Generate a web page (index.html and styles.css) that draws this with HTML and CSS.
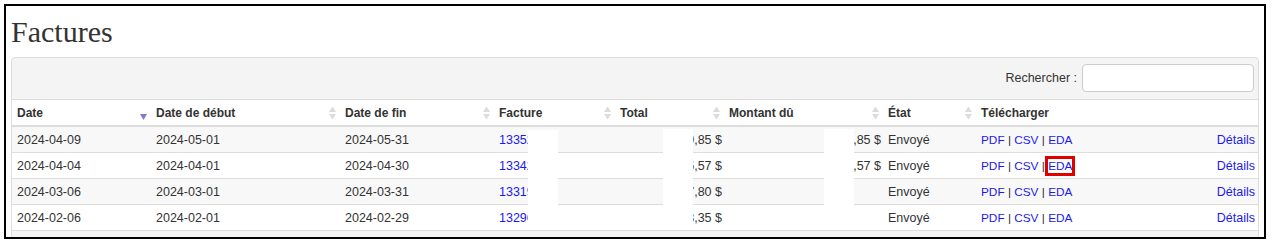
FILE: index.html
```html
<!DOCTYPE html>
<html lang="fr">
<head>
<meta charset="utf-8">
<title>Factures</title>
<link rel="stylesheet" href="styles.css">
</head>
<body>
<div class="frame">
  <h1 class="title">Factures</h1>
  <div class="panel">
    <div class="toolbar">
      <label class="search-label">Rechercher :</label>
      <input class="search-input" type="text">
    </div>
    <table class="grid">
      <colgroup>
        <col class="c1"><col class="c2"><col class="c3"><col class="c4"><col class="c5"><col class="c6"><col class="c7"><col class="c8"><col class="c9">
      </colgroup>
      <thead>
        <tr>
          <th><div class="th-in"><span>Date</span><svg class="sort" width="7" height="14" viewBox="0 0 7 14"><polygon class="s-down-active" points="0,8 7,8 3.5,14"/></svg></div></th>
          <th><div class="th-in"><span>Date de début</span><svg class="sort" width="7" height="14" viewBox="0 0 7 14"><polygon points="0,6 3.5,0.5 7,6"/><polygon points="0,8 7,8 3.5,13.5"/></svg></div></th>
          <th><div class="th-in"><span>Date de fin</span><svg class="sort" width="7" height="14" viewBox="0 0 7 14"><polygon points="0,6 3.5,0.5 7,6"/><polygon points="0,8 7,8 3.5,13.5"/></svg></div></th>
          <th><div class="th-in"><span>Facture</span><svg class="sort" width="7" height="14" viewBox="0 0 7 14"><polygon points="0,6 3.5,0.5 7,6"/><polygon points="0,8 7,8 3.5,13.5"/></svg></div></th>
          <th><div class="th-in"><span>Total</span><svg class="sort" width="7" height="14" viewBox="0 0 7 14"><polygon points="0,6 3.5,0.5 7,6"/><polygon points="0,8 7,8 3.5,13.5"/></svg></div></th>
          <th><div class="th-in"><span>Montant dû</span><svg class="sort" width="7" height="14" viewBox="0 0 7 14"><polygon points="0,6 3.5,0.5 7,6"/><polygon points="0,8 7,8 3.5,13.5"/></svg></div></th>
          <th><div class="th-in"><span>État</span><svg class="sort" width="7" height="14" viewBox="0 0 7 14"><polygon points="0,6 3.5,0.5 7,6"/><polygon points="0,8 7,8 3.5,13.5"/></svg></div></th>
          <th><div class="th-in"><span>Télécharger</span></div></th>
          <th></th>
        </tr>
      </thead>
      <tbody>
        <tr class="odd">
          <td>2024-04-09</td><td>2024-05-01</td><td>2024-05-31</td>
          <td><a class="lnk" href="#">13352</a></td>
          <td class="num">1 209,85 $</td><td class="num">209,85 $</td>
          <td>Envoyé</td>
          <td class="dl"><a class="lnk" href="#">PDF</a> | <a class="lnk" href="#">CSV</a> | <a class="lnk" href="#">EDA</a></td>
          <td class="right"><a class="lnk" href="#">Détails</a></td>
        </tr>
        <tr>
          <td>2024-04-04</td><td>2024-04-01</td><td>2024-04-30</td>
          <td><a class="lnk" href="#">13342</a></td>
          <td class="num">1 165,57 $</td><td class="num">165,57 $</td>
          <td>Envoyé</td>
          <td class="dl"><a class="lnk" href="#">PDF</a> | <a class="lnk" href="#">CSV</a> | <a class="lnk mark" href="#">EDA</a></td>
          <td class="right"><a class="lnk" href="#">Détails</a></td>
        </tr>
        <tr class="odd">
          <td>2024-03-06</td><td>2024-03-01</td><td>2024-03-31</td>
          <td><a class="lnk" href="#">13319</a></td>
          <td class="num">1 177,80 $</td><td class="num"></td>
          <td>Envoyé</td>
          <td class="dl"><a class="lnk" href="#">PDF</a> | <a class="lnk" href="#">CSV</a> | <a class="lnk" href="#">EDA</a></td>
          <td class="right"><a class="lnk" href="#">Détails</a></td>
        </tr>
        <tr>
          <td>2024-02-06</td><td>2024-02-01</td><td>2024-02-29</td>
          <td><a class="lnk" href="#">13296</a></td>
          <td class="num">1 183,35 $</td><td class="num"></td>
          <td>Envoyé</td>
          <td class="dl"><a class="lnk" href="#">PDF</a> | <a class="lnk" href="#">CSV</a> | <a class="lnk" href="#">EDA</a></td>
          <td class="right"><a class="lnk" href="#">Détails</a></td>
        </tr>
      </tbody>
    </table>
    <div class="footer"></div>
  </div>
  <div class="redact redact-a"></div>
  <div class="redact redact-b"></div>
  <div class="redact redact-c"></div>
</div>
</body>
</html>
```

FILE: styles.css
```css
html, body {
  margin: 0;
  padding: 0;
  background: #fff;
}
body {
  padding: 4px;
  font-family: "Liberation Sans", Arial, sans-serif;
  color: #333;
}
.frame {
  position: relative;
  box-sizing: border-box;
  width: 1262px;
  height: 235px;
  border: 2px solid #000;
  padding: 9px 5px 0 5px;
  overflow: hidden;
}
.title {
  margin: 0 0 8px 0;
  font-family: "Liberation Serif", "Times New Roman", serif;
  font-size: 30px;
  line-height: 34px;
  font-weight: normal;
  color: #333;
}
.panel {
  border: 1px solid #ddd;
  border-radius: 4px 4px 0 0;
  background: #f4f4f4;
}
.toolbar {
  display: flex;
  justify-content: flex-end;
  align-items: center;
  gap: 5px;
  padding: 6px 4px 7px 0;
}
.search-label {
  font-size: 12.5px;
  color: #333;
}
.search-input {
  box-sizing: border-box;
  width: 172px;
  height: 28px;
  margin: 0;
  border: 1px solid #ccc;
  border-radius: 4px;
  background: #fff;
  padding: 0 6px;
}
.grid {
  width: 100%;
  border-collapse: collapse;
  table-layout: fixed;
  background: #fff;
}
.c1 { width: 139px; }
.c2 { width: 189px; }
.c3 { width: 154px; }
.c4 { width: 121px; }
.c5 { width: 109px; }
.c6 { width: 159px; }
.c7 { width: 93px; }
.c8 { width: 202px; }
.c9 { width: 80px; }
.grid th {
  height: 25px;
  padding: 0 4px 0 5px;
  border-top: 1px solid #ddd;
  border-bottom: 2px solid #ddd;
  font-size: 12px;
  line-height: 14px;
  font-weight: bold;
  text-align: left;
  color: #333;
  background: #fff;
}
.th-in {
  display: flex;
  justify-content: space-between;
  align-items: center;
}
.sort polygon {
  fill: #dcdcdc;
}
.sort .s-down-active {
  fill: #7b7bd6;
}
.grid td {
  height: 25px;
  padding: 0 5px;
  border-bottom: 1px solid #ddd;
  font-size: 12.5px;
  line-height: 14px;
  color: #333;
  white-space: nowrap;
  overflow: hidden;
}
.grid td.dl {
  font-size: 11.8px;
}
.grid tr.odd td {
  background: #f8f8f8;
}
.grid td.num {
  text-align: right;
  padding-right: 2px;
}
.grid td.right {
  text-align: right;
  padding-right: 3px;
}
.lnk {
  color: #1a1aee;
  text-decoration: none;
}
.mark {
  outline: 3px solid #e00000;
  outline-offset: 0;
}
.footer {
  height: 20px;
  background: #f4f4f4;
}
.redact {
  position: absolute;
  background: #fff;
}
.redact-a { left: 522px; top: 124px; width: 30px; height: 99px; }
.redact-b { left: 657px; top: 123px; width: 30px; height: 100px; }
.redact-c { left: 818px; top: 123px; width: 30px; height: 100px; }
```
